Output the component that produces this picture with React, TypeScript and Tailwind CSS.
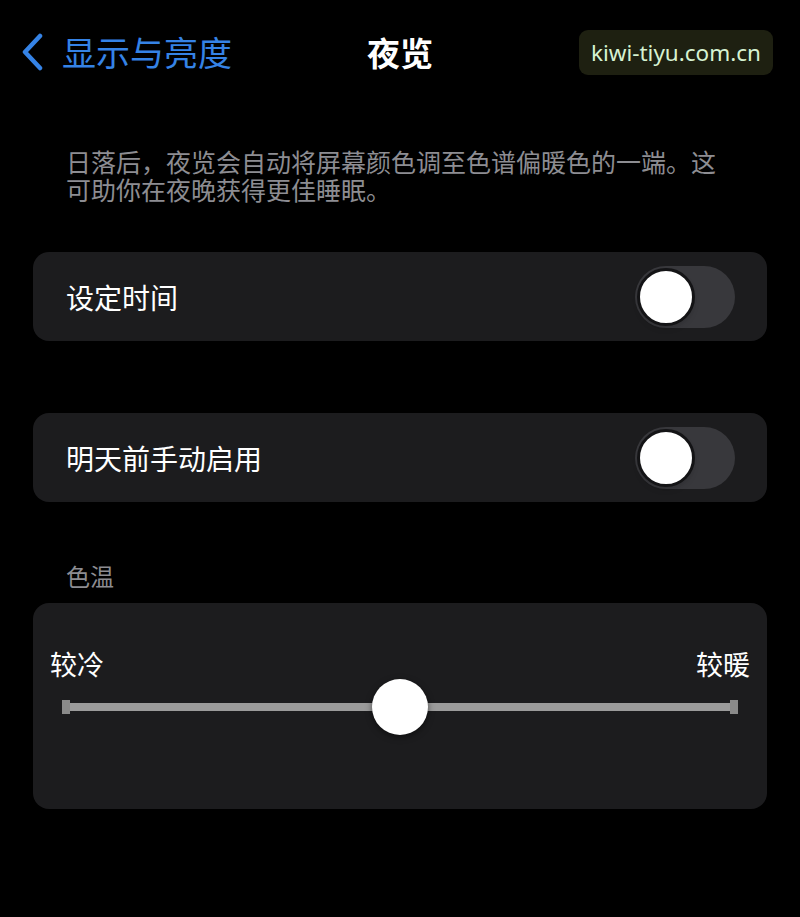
import { useState } from "react";

const cjk = {
  fontFamily:
    '"Noto Sans CJK SC", "Noto Sans", "Liberation Sans", sans-serif',
};

function Toggle({ on, onChange }: { on: boolean; onChange: () => void }) {
  return (
    <button
      onClick={onChange}
      className={`${on ? "bg-[#30d158] justify-end" : "bg-[#38383c] justify-start"} flex h-[62px] w-[100px] items-center rounded-full p-[2px]`}
    >
      <span className="block h-[58px] w-[58px] rounded-full border-[3px] border-[#141416] bg-white shadow-md" />
    </button>
  );
}

function Row({
  label,
  on,
  onChange,
}: {
  label: string;
  on: boolean;
  onChange: () => void;
}) {
  return (
    <div className="mx-[33px] flex h-[89px] items-center justify-between rounded-[16px] bg-[#1c1c1e] pr-[32px] pl-[33px]">
      <span className="text-[28px] leading-none text-white">{label}</span>
      <Toggle on={on} onChange={onChange} />
    </div>
  );
}

export default function App() {
  const [scheduled, setScheduled] = useState(false);
  const [manual, setManual] = useState(false);
  const [warmth] = useState(50);

  return (
    <div className="h-[917px] w-[800px] overflow-hidden bg-black" style={cjk}>
      {/* nav bar */}
      <header className="grid h-[104px] grid-cols-3 items-center">
        <div className="flex items-center gap-[18px] pl-[20px] text-[#3583e6]">
          <svg width="24" height="38" viewBox="0 0 24 38" fill="none">
            <path
              d="M20 3 L5 19 L20 35"
              stroke="currentColor"
              strokeWidth="4.5"
              strokeLinecap="round"
              strokeLinejoin="round"
            />
          </svg>
          <span className="text-[34px] leading-none whitespace-nowrap">
            显示与亮度
          </span>
        </div>
        <div className="text-center text-[33px] leading-none font-bold text-white">
          夜览
        </div>
        <div className="flex justify-end pr-[27px]">
          <span
            className="rounded-[9px] bg-[#1e2011] px-[12px] py-[7px] text-[22.5px] leading-[31px] text-[#d6f2d2]"
            style={{ fontFamily: '"Noto Sans", "Open Sans", sans-serif' }}
          >
            kiwi-tiyu.com.cn
          </span>
        </div>
      </header>

      <p className="mt-[43px] ml-[66px] w-[660px] text-[25px] leading-[28px] text-[#8d8d92]">
        日落后，夜览会自动将屏幕颜色调至色谱偏暖色的一端。这可助你在夜晚获得更佳睡眠。
      </p>

      <div className="mt-[49px]">
        <Row
          label="设定时间"
          on={scheduled}
          onChange={() => setScheduled(!scheduled)}
        />
      </div>

      <div className="mt-[72px]">
        <Row
          label="明天前手动启用"
          on={manual}
          onChange={() => setManual(!manual)}
        />
      </div>

      <div className="mt-[62px] pl-[66px] text-[24px] leading-none text-[#8d8d92]">
        色温
      </div>

      {/* colour temperature */}
      <div className="mx-[33px] mt-[15px] h-[206px] rounded-[16px] bg-[#1c1c1e] px-[17px] pt-[47px]">
        <div className="flex justify-between text-[27px] leading-none text-white">
          <span>较冷</span>
          <span>较暖</span>
        </div>
        <div className="relative mx-[12px] mt-[2px] flex h-[56px] items-center">
          <span className="h-[14px] w-[8px] bg-[#8a8a8a]" />
          <span className="h-[8px] flex-1 bg-[#9b9b9b]" />
          <span className="h-[14px] w-[8px] bg-[#8a8a8a]" />
          <span
            className="absolute top-0 h-[56px] w-[56px] -translate-x-1/2 rounded-full bg-white shadow-[0_2px_6px_rgba(0,0,0,0.5)]"
            style={{ left: `${warmth}%` }}
          />
        </div>
      </div>
    </div>
  );
}
